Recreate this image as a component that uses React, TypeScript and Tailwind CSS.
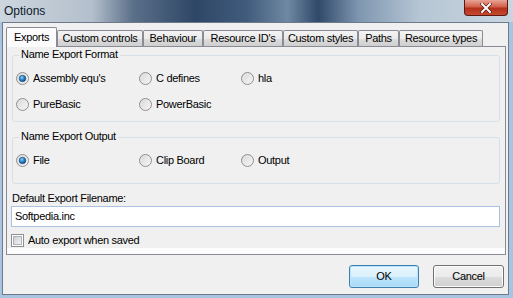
import React from "react";

const tabs = [
  { label: "Exports", w: "w-[51px]" },
  { label: "Custom controls", w: "w-[86px]" },
  { label: "Behaviour", w: "w-[60px]" },
  { label: "Resource ID's", w: "w-[80px]" },
  { label: "Custom styles", w: "w-[75px]" },
  { label: "Paths", w: "w-[41px]" },
  { label: "Resource types", w: "w-[84px]" },
];

function Radio({ checked }: { checked?: boolean }) {
  return (
    <svg width="13" height="13" viewBox="0 0 13 13" className="shrink-0">
      <defs>
        <linearGradient id="rbg" x1="0" y1="0" x2="1" y2="1">
          <stop offset="0" stopColor="#d4d4d4" />
          <stop offset="1" stopColor="#fbfbfb" />
        </linearGradient>
        <radialGradient id="rdot" cx="0.4" cy="0.35" r="0.7">
          <stop offset="0" stopColor="#8fd0f5" />
          <stop offset="0.5" stopColor="#2a85c9" />
          <stop offset="1" stopColor="#0b3f77" />
        </radialGradient>
      </defs>
      <circle cx="6.5" cy="6.5" r="6" fill="url(#rbg)" stroke="#8f8f8f" strokeWidth="1" />
      <circle cx="6.5" cy="6.5" r="4.4" fill="none" stroke="#e8e8e8" strokeWidth="0.8" />
      {checked && <circle cx="6.5" cy="6.5" r="3.3" fill="url(#rdot)" stroke="#1c4d7a" strokeWidth="0.6" />}
    </svg>
  );
}

function RadioItem({ label, checked, w }: { label: string; checked?: boolean; w: string }) {
  return (
    <div className={`flex items-center gap-[4px] h-[13px] ${w}`}>
      <Radio checked={checked} />
      <span className="leading-[13px]">{label}</span>
    </div>
  );
}

function GroupBox({ title, h, mt, children }: { title: string; h: string; mt: string; children: React.ReactNode }) {
  return (
    <div className={`relative ${mt} ml-[5px] w-[488px] ${h} border border-[#d5dfe5] rounded-[3px]`}>
      <span className="absolute left-[6px] -top-[8px] px-[2px] bg-[#f0f0f0] leading-[13px]">{title}</span>
      {children}
    </div>
  );
}

export default function App() {
  return (
    <div
      className="w-[513px] h-[298px] flex flex-col overflow-hidden bg-[#a9c4e2] text-[11px] tracking-[-0.3px] text-black"
      style={{ fontFamily: '"Liberation Sans", Arial, sans-serif' }}
    >
      {/* title bar */}
      <div className="h-[22px] flex items-start justify-between bg-[linear-gradient(90deg,#cdd6df_0%,#b3bfcc_18%,#5a6f88_26%,#2f4767_38%,#405b7c_48%,#6f88a3_56%,#31496a_62%,#7f97b1_70%,#b7c6d4_82%,#c9d6e2_100%)]">
        <span className="pl-[4px] pt-[3px] text-[12px] tracking-normal text-[#0b1a2a] leading-[16px]">Options</span>
        <div className="mr-[5px] w-[44px] h-[16px] rounded-b-[4px] border border-t-0 border-[#5a1a12] bg-[linear-gradient(180deg,#e8a395_0%,#d2604a_45%,#b3301b_55%,#c64a30_100%)] flex items-center justify-center">
          <svg width="12" height="10" viewBox="0 0 12 10">
            <path d="M2 1 L10 9 M10 1 L2 9" stroke="#4a1208" strokeWidth="3.2" strokeLinecap="square" />
            <path d="M2 1 L10 9 M10 1 L2 9" stroke="#ffffff" strokeWidth="2" strokeLinecap="square" />
          </svg>
        </div>
      </div>

      {/* client area */}
      <div className="ml-[2px] w-[507px] h-[273px] border border-[#6c7a8a] bg-[#f0f0f0] pl-[3px] pt-[4px] flex flex-col">
        <div className="flex items-end h-[19px] relative z-10">
          {tabs.map((t, i) =>
            i === 0 ? (
              <div
                key={t.label}
                className={`${t.w} h-[20px] -mb-px border border-b-0 border-[#898c95] bg-[#fcfcfc] flex items-center justify-center rounded-t-[2px] pb-[1px]`}
              >
                {t.label}
              </div>
            ) : (
              <div
                key={t.label}
                className={`${t.w} h-[16px] border border-b-0 border-[#898c95] bg-[linear-gradient(180deg,#f3f3f3_0%,#ebebeb_50%,#dddddd_51%,#cfcfcf_100%)] flex items-center justify-center rounded-t-[2px]`}
              >
                {t.label}
              </div>
            )
          )}
        </div>

        {/* tab panel */}
        <div className="w-[500px] h-[209px] border border-[#898c95] bg-[#fcfcfc] flex flex-col">
          <div className="h-[201px] bg-[#f0f0f0] flex flex-col">
            <GroupBox title="Name Export Format" h="h-[67px]" mt="mt-[8px]">
              <div className="flex pl-[3px] pt-[16px]">
                <RadioItem label="Assembly equ's" checked w="w-[123px]" />
                <RadioItem label="C defines" w="w-[102px]" />
                <RadioItem label="hla" w="w-[80px]" />
              </div>
              <div className="flex pl-[3px] pt-[13px]">
                <RadioItem label="PureBasic" w="w-[123px]" />
                <RadioItem label="PowerBasic" w="w-[102px]" />
              </div>
            </GroupBox>
            <GroupBox title="Name Export Output" h="h-[47px]" mt="mt-[15px]">
              <div className="flex pl-[3px] pt-[16px]">
                <RadioItem label="File" checked w="w-[123px]" />
                <RadioItem label="Clip Board" w="w-[102px]" />
                <RadioItem label="Output" w="w-[80px]" />
              </div>
            </GroupBox>
            <div className="mt-[8px] ml-[5px] leading-[13px]">Default Export Filename:</div>
            <div className="mt-[1px] ml-[4px] w-[489px] h-[21px] border border-[#a9c3de] bg-white flex items-center pl-[3px]">
              Softpedia.inc
            </div>
            <div className="mt-[7px] ml-[4px] flex items-center gap-[4px] h-[13px]">
              <div className="w-[13px] h-[13px] border border-[#8e8f8f] bg-white p-[1px]">
                <div className="w-full h-full bg-[linear-gradient(135deg,#cbcfd5_0%,#f4f4f4_100%)] border border-[#aeb3b9]" />
              </div>
              <span className="leading-[13px]">Auto export when saved</span>
            </div>
          </div>
        </div>

        {/* buttons */}
        <div className="mt-[10px] flex justify-end gap-[14px] pr-[4px]">
          <button className="w-[70px] h-[23px] rounded-[3px] border border-[#3c7fb1] shadow-[inset_0_0_0_1px_#bde5fb] bg-[linear-gradient(180deg,#eaf6fd_0%,#d9f0fc_50%,#bee6fd_51%,#a7d9f5_100%)] leading-[13px]">
            OK
          </button>
          <button className="w-[71px] h-[23px] rounded-[3px] border border-[#707070] shadow-[inset_0_0_0_1px_#fcfcfc] bg-[linear-gradient(180deg,#f2f2f2_0%,#ebebeb_50%,#dddddd_51%,#cfcfcf_100%)] leading-[13px]">
            Cancel
          </button>
        </div>
      </div>
    </div>
  );
}
